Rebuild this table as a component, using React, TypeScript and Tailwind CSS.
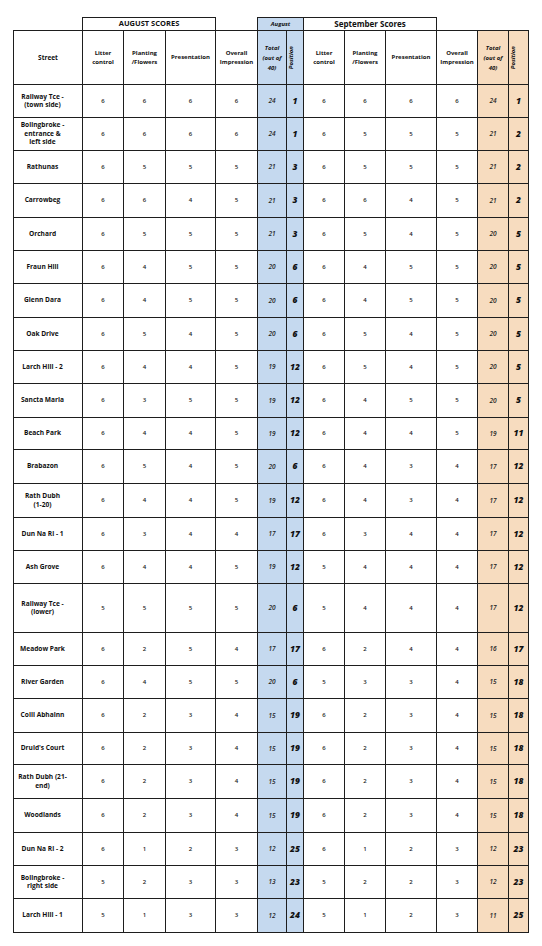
import React from 'react'

type Row = {
  name: string[]
  h: number
  aug: number[]
  sep: number[]
}

// name lines, row height, [litter, planting, presentation, overall, total, position]
const rows: Row[] = [
  { name: ['Railway Tce -', '(town side)'], h: 33, aug: [6, 6, 6, 6, 24, 1], sep: [6, 6, 6, 6, 24, 1] },
  { name: ['Bolingbroke -', 'entrance &', 'left side'], h: 33, aug: [6, 6, 6, 6, 24, 1], sep: [6, 5, 5, 5, 21, 2] },
  { name: ['Rathunas'], h: 33, aug: [6, 5, 5, 5, 21, 3], sep: [6, 5, 5, 5, 21, 2] },
  { name: ['Carrowbeg'], h: 34, aug: [6, 6, 4, 5, 21, 3], sep: [6, 6, 4, 5, 21, 2] },
  { name: ['Orchard'], h: 33, aug: [6, 5, 5, 5, 21, 3], sep: [6, 5, 4, 5, 20, 5] },
  { name: ['Fraun Hill'], h: 33, aug: [6, 4, 5, 5, 20, 6], sep: [6, 4, 5, 5, 20, 5] },
  { name: ['Glenn Dara'], h: 34, aug: [6, 4, 5, 5, 20, 6], sep: [6, 4, 5, 5, 20, 5] },
  { name: ['Oak Drive'], h: 33, aug: [6, 5, 4, 5, 20, 6], sep: [6, 5, 4, 5, 20, 5] },
  { name: ['Larch Hill - 2'], h: 33, aug: [6, 4, 4, 5, 19, 12], sep: [6, 5, 4, 5, 20, 5] },
  { name: ['Sancta Maria'], h: 34, aug: [6, 3, 5, 5, 19, 12], sep: [6, 4, 5, 5, 20, 5] },
  { name: ['Beach Park'], h: 32, aug: [6, 4, 4, 5, 19, 12], sep: [6, 4, 4, 5, 19, 11] },
  { name: ['Brabazon'], h: 34, aug: [6, 5, 4, 5, 20, 6], sep: [6, 4, 3, 4, 17, 12] },
  { name: ['Rath Dubh', '(1-20)'], h: 34, aug: [6, 4, 4, 5, 19, 12], sep: [6, 4, 3, 4, 17, 12] },
  { name: ['Dun Na Ri - 1'], h: 33, aug: [6, 3, 4, 4, 17, 17], sep: [6, 3, 4, 4, 17, 12] },
  { name: ['Ash Grove'], h: 33, aug: [6, 4, 4, 5, 19, 12], sep: [5, 4, 4, 4, 17, 12] },
  { name: ['Railway Tce -', '(lower)'], h: 49, aug: [5, 5, 5, 5, 20, 6], sep: [5, 4, 4, 4, 17, 12] },
  { name: ['Meadow Park'], h: 33, aug: [6, 2, 5, 4, 17, 17], sep: [6, 2, 4, 4, 16, 17] },
  { name: ['River Garden'], h: 33, aug: [6, 4, 5, 5, 20, 6], sep: [5, 3, 3, 4, 15, 18] },
  { name: ['Coill Abhainn'], h: 34, aug: [6, 2, 3, 4, 15, 19], sep: [6, 2, 3, 4, 15, 18] },
  { name: ["Druid's Court"], h: 32, aug: [6, 2, 3, 4, 15, 19], sep: [6, 2, 3, 4, 15, 18] },
  { name: ['Rath Dubh (21-', 'end)'], h: 34, aug: [6, 2, 3, 4, 15, 19], sep: [6, 2, 3, 4, 15, 18] },
  { name: ['Woodlands'], h: 34, aug: [6, 2, 3, 4, 15, 19], sep: [6, 2, 3, 4, 15, 18] },
  { name: ['Dun Na Ri - 2'], h: 33, aug: [6, 1, 2, 3, 12, 25], sep: [6, 1, 2, 3, 12, 23] },
  { name: ['Bolingbroke -', 'right side'], h: 33, aug: [5, 2, 3, 3, 13, 23], sep: [5, 2, 2, 3, 12, 23] },
  { name: ['Larch Hill - 1'], h: 34, aug: [5, 1, 3, 3, 12, 24], sep: [5, 1, 2, 3, 11, 25] },
]

const cell = 'border-[1.5px] border-[#1e1e1e] text-center align-middle p-0'
const blue = 'bg-[#c5d9ef]'
const orange = 'bg-[#f7dcbf]'

function Scores({ vals, tint }: { vals: number[]; tint: string }) {
  return (
    <>
      {vals.slice(0, 4).map((v, i) => (
        <td key={i} className={`${cell} text-[6px] font-semibold text-[#222]`}>
          {v}
        </td>
      ))}
      <td className={`${cell} ${tint} text-[6.5px] font-semibold italic text-[#222]`}>{vals[4]}</td>
      <td className={`${cell} ${tint} text-[8.5px] font-extrabold italic text-[#111]`}>{vals[5]}</td>
    </>
  )
}

function HeadCells({ tint }: { tint: string }) {
  const h = `${cell} text-[6px] font-bold leading-[9px] text-[#111]`
  return (
    <>
      <td className={h}>
        Litter
        <br />
        control
      </td>
      <td className={h}>
        Planting
        <br />
        /Flowers
      </td>
      <td className={h}>Presentation</td>
      <td className={h}>
        Overall
        <br />
        Impression
      </td>
      <td className={`${h} ${tint} italic leading-[10px]`}>
        Total
        <br />
        (out of
        <br />
        40)
      </td>
      <td className={`${h} ${tint} italic`}>
        <div className="mx-auto rotate-180 [writing-mode:vertical-rl]">Position</div>
      </td>
    </>
  )
}

export default function App() {
  return (
    <div className="min-h-[946px] w-[542px] bg-white pl-[13px] pt-[17px] font-['Open_Sans','Liberation_Sans',Arial,sans-serif]">
      <table className="w-[515px] table-fixed border-collapse">
        <colgroup>
          <col className="w-[69px]" />
          <col className="w-[41px]" />
          <col className="w-[42px]" />
          <col className="w-[50px]" />
          <col className="w-[42px]" />
          <col className="w-[29px]" />
          <col className="w-[17px]" />
          <col className="w-[41px]" />
          <col className="w-[41px]" />
          <col className="w-[51px]" />
          <col className="w-[41px]" />
          <col className="w-[31px]" />
          <col className="w-[20px]" />
        </colgroup>
        <tbody>
          <tr className="h-[13px]">
            <td className="p-0" />
            <td colSpan={3} className={`${cell} text-[7.5px] font-bold text-[#111]`}>
              AUGUST SCORES
            </td>
            <td className="p-0" />
            <td colSpan={2} className={`${cell} ${blue} text-[6px] font-bold italic text-[#111]`}>
              August
            </td>
            <td colSpan={3} className={`${cell} text-[8px] font-bold text-[#111]`}>
              September Scores
            </td>
            <td className="p-0" />
            <td className="p-0" />
            <td className="p-0" />
          </tr>
          <tr className="h-[54px]">
            <td className={`${cell} text-[6.5px] font-bold text-[#111]`}>Street</td>
            <HeadCells tint={blue} />
            <HeadCells tint={orange} />
          </tr>
          {rows.map((r) => (
            <tr key={r.name.join(' ')} style={{ height: r.h }}>
              <td className={`${cell} pl-[1px] pr-[12px] text-[6.6px] font-bold leading-[8.5px] text-[#111]`}>
                {r.name.map((l, i) => (
                  <div key={i}>{l}</div>
                ))}
              </td>
              <Scores vals={r.aug} tint={blue} />
              <Scores vals={r.sep} tint={orange} />
            </tr>
          ))}
        </tbody>
      </table>
    </div>
  )
}
